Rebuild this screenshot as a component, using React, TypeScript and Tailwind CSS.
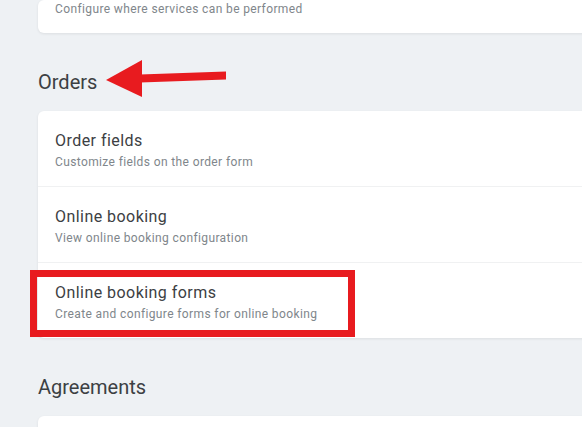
import React from "react";

function Row({ title, sub, last }: { title: string; sub: string; last?: boolean }) {
  return (
    <div className={`pl-[17px] pt-[18px] pb-4 ${last ? "" : "border-b border-[#f0f1f2]"}`}>
      <div className="text-[16px] leading-[24px] text-[#3c4043] tracking-[0.45px]">{title}</div>
      <div className="mt-[1px] text-[12px] leading-[16px] text-[#80868b] tracking-[0.38px]">{sub}</div>
    </div>
  );
}

function Card({ children, className = "" }: { children?: React.ReactNode; className?: string }) {
  return (
    <div className={`w-[600px] bg-white rounded-md shadow-[0_1px_3px_rgba(0,0,0,0.08)] ${className}`}>{children}</div>
  );
}

export default function App() {
  return (
    <div
      className="relative w-[582px] h-[427px] overflow-hidden bg-[#eef1f4]"
      style={{ fontFamily: "Roboto, 'Noto Sans', sans-serif" }}
    >
      <div className="flex flex-col pl-[38px]">
        <Card className="pl-[17px] pt-[1px] pb-4">
          <div className="text-[12px] leading-[16px] text-[#80868b] tracking-[0.38px]">
            Configure where services can be performed
          </div>
        </Card>
        <h2 className="mt-[35px] mb-[15px] text-[20px] leading-[28px] text-[#3c4043]">Orders</h2>
        <Card>
          <Row title="Order fields" sub="Customize fields on the order form" />
          <Row title="Online booking" sub="View online booking configuration" />
          <Row title="Online booking forms" sub="Create and configure forms for online booking" last />
        </Card>
        <h2 className="mt-[35px] mb-[15px] text-[20px] leading-[28px] text-[#3c4043]">Agreements</h2>
        <Card className="h-[80px]" />
      </div>

      <div className="absolute left-[30px] top-[270px] w-[325px] h-[67px] border-[7px] border-[#e81b1f]" />

      <svg className="absolute left-0 top-0" width="582" height="427" viewBox="0 0 582 427">
        <polygon points="106,80 142,60 142,97" fill="#e81b1f" />
        <polygon points="140,74.5 226,71.5 226,79.5 140,82.5" fill="#e81b1f" />
      </svg>
    </div>
  );
}
